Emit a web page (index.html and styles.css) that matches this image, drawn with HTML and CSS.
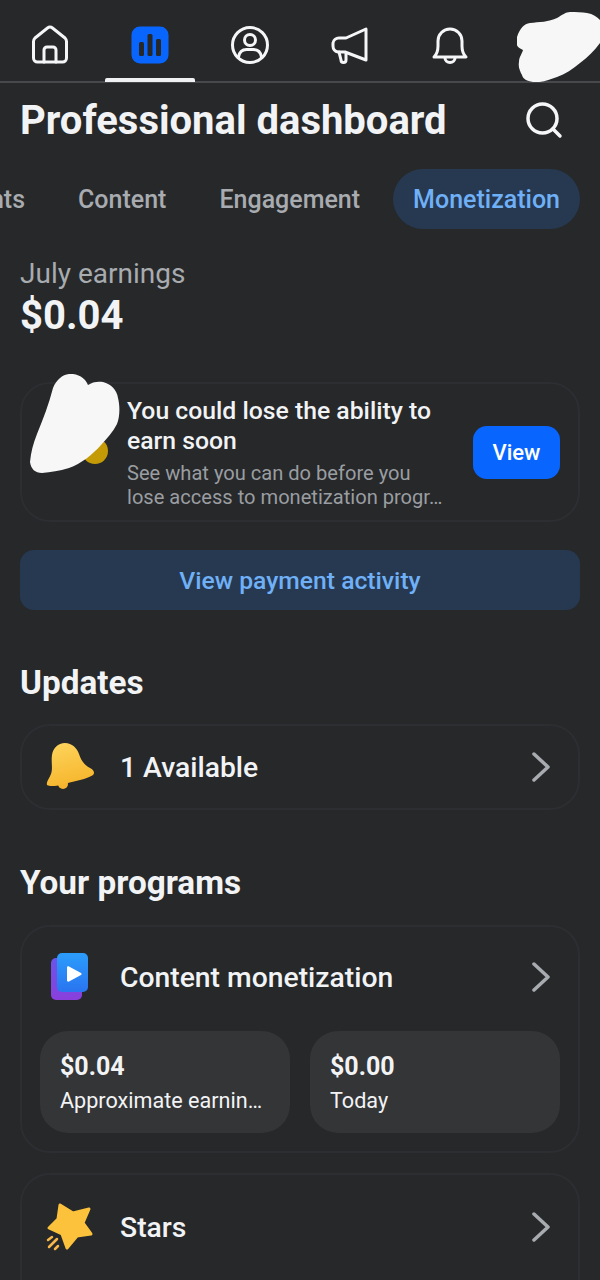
FILE: index.html
```html
<!DOCTYPE html>
<html lang="en">
<head>
    <meta charset="UTF-8">
    <meta name="viewport" content="width=device-width, initial-scale=1.0">
    <title>Professional dashboard</title>
    <link rel="stylesheet" href="styles.css">
</head>
<body>
    <nav class="nav">
        <div class="nav-item">
            <svg class="nav-icon" viewBox="0 0 40 40"><path d="M3.500 16.500c0-1.500.5-2.500 1.500-3.500L17.500 3a4 4 0 0 1 5 0L35 13c1 1 1.500 2 1.500 3.500V33a4 4 0 0 1-4 4h-25a4 4 0 0 1-4-4z"/><path d="M14 37V25a3 3 0 0 1 3-3h6a3 3 0 0 1 3 3v12"/></svg>
        </div>
        <div class="nav-item nav-item-active">
            <svg class="nav-icon" viewBox="0 0 40 40"><rect class="dash-bg" x="3" y="3" width="34" height="34" rx="7"/><rect class="dash-bar" x="9" y="17" width="5" height="14" rx="1.500"/><rect class="dash-bar" x="17.500" y="9" width="5" height="22" rx="1.500"/><rect class="dash-bar" x="26" y="14" width="5" height="17" rx="1.500"/></svg>
        </div>
        <div class="nav-item">
            <svg class="nav-icon" viewBox="0 0 40 40"><circle cx="20" cy="20" r="17.500"/><circle cx="20" cy="15" r="5.500"/><path d="M8.500 32c1-5.500 4.500-7.500 8-7.500h7c3.500 0 7 2 8 7.500"/></svg>
        </div>
        <div class="nav-item">
            <svg class="nav-icon" viewBox="0 0 40 40"><path d="M36 4v31L15 27H8a6 6 0 0 1-5-6v-3a6 6 0 0 1 6-5h7z"/><path d="M9 27l2 8a2.500 2.500 0 0 0 5 0v-7"/></svg>
        </div>
        <div class="nav-item">
            <svg class="nav-icon" viewBox="0 0 40 40"><path d="M4 32c3-3 4-6 4-11v-5a12 12 0 0 1 24 0v5c0 5 1 8 4 11z"/><path d="M15 33a5 4.500 0 0 0 10 0"/></svg>
        </div>
        <div class="nav-item"></div>
    </nav>

    <header class="page-head">
        <h1 class="title">Professional dashboard</h1>
        <svg class="search-icon" viewBox="0 0 40 40"><circle cx="18.500" cy="18.500" r="14.500"/><path d="M29 29l7 7"/></svg>
    </header>

    <div class="tabs">
        <span class="tab">Insights</span>
        <span class="tab">Content</span>
        <span class="tab">Engagement</span>
        <span class="tab tab-active">Monetization</span>
    </div>

    <main class="content">
        <section class="earnings">
            <p class="earnings-label">July earnings</p>
            <p class="earnings-value">$0.04</p>
        </section>

        <section class="card alert">
            <span class="alert-dot"></span>
            <div class="alert-text">
                <h3 class="alert-title">You could lose the ability to earn soon</h3>
                <p class="alert-sub">See what you can do before you lose access to monetization progr…</p>
            </div>
            <button class="view-btn" type="button">View</button>
        </section>

        <button class="pay-btn" type="button">View payment activity</button>

        <h2 class="section-title">Updates</h2>
        <section class="card">
            <div class="row row-update">
                <svg class="row-icon" viewBox="0 0 50 50">
                    <defs><linearGradient id="gold" x1="0.300" y1="0" x2="0.600" y2="1"><stop offset="0" stop-color="#fdd35a"/><stop offset="1" stop-color="#f6b52c"/></linearGradient></defs>
                    <circle cx="19" cy="42" r="5" fill="#f5b52e"/>
                    <path fill="url(#gold)" d="M3 43C2 40 5 37 7 32 9 27 7 20 8 13 9 6 14 1 21 1c7 0 12 5 14 11 2 6 5 11 11 14 4 2 5 5 3 7-4 3-13 5-21 7-8 2-20 6-25 3z"/>
                </svg>
                <span class="row-label">1 Available</span>
                <svg class="chevron" viewBox="0 0 18 30"><path d="M2 2l14 13L2 28"/></svg>
            </div>
        </section>

        <h2 class="section-title section-title-programs">Your programs</h2>
        <section class="card">
            <div class="row row-tall">
                <svg class="row-icon" viewBox="0 0 50 50">
                    <defs>
                        <linearGradient id="blue" x1="0" y1="0" x2="0" y2="1"><stop offset="0" stop-color="#2b9dfb"/><stop offset="1" stop-color="#2a74f0"/></linearGradient>
                        <linearGradient id="violet" x1="0" y1="0" x2="0" y2="1"><stop offset="0" stop-color="#6a55ea"/><stop offset="1" stop-color="#8a3fdc"/></linearGradient>
                    </defs>
                    <rect x="7" y="6" width="31" height="42" rx="5" fill="url(#violet)"/>
                    <rect x="13" y="1" width="31" height="39" rx="5" fill="url(#blue)"/>
                    <path d="M23 15.500c0-1 1-1.500 2-1l12 6.500c.8.500.8 1.500 0 2l-12 6.500c-1 .5-2 0-2-1z" fill="#fff"/>
                </svg>
                <span class="row-label">Content monetization</span>
                <svg class="chevron" viewBox="0 0 18 30"><path d="M2 2l14 13L2 28"/></svg>
            </div>
            <div class="stats">
                <div class="stat">
                    <span class="stat-value">$0.04</span>
                    <span class="stat-label">Approximate earnin…</span>
                </div>
                <div class="stat">
                    <span class="stat-value">$0.00</span>
                    <span class="stat-label">Today</span>
                </div>
            </div>
        </section>

        <section class="card card-stars">
            <div class="row">
                <svg class="row-icon" viewBox="0 0 50 50">
                    <path class="star" d="M16 3l13 8 16-4-6 14 8 11-14 2-10 12-5-14-13-6 9-9z"/>
                    <path d="M4 38l4-3M5 45l8-8M11 47l3-3" stroke="#f8b74a" stroke-width="2.500" stroke-linecap="round" fill="none"/>
                </svg>
                <span class="row-label">Stars</span>
                <svg class="chevron" viewBox="0 0 18 30"><path d="M2 2l14 13L2 28"/></svg>
            </div>
        </section>
    </main>

    <!-- scribbles the screenshot's owner painted over the profile pictures -->
    <svg class="scribble scribble-top" viewBox="0 0 83 70"><path d="M0 25C3 16 7 12 13 11c9-1 19-1 27-5 5-3 9-6 13-6 6 0 12 0 17 1 6 1 10 4 13 7v23C77 39 71 45 63 51c-7 6-15 11-23 14-8 3-16 6-24 5-6-1-10-3-11-7-2-4-4-8-3-13 0-5 3-8 4-12-3-2-7-3-6-7 0-2-1-4 0-6z"/></svg>
    <svg class="scribble scribble-alert" viewBox="0 0 92 100"><path d="M1 88C2 78 4 70 8 60 14 45 20 30 24 14 28 4 36-1 44 0c8 1 13 6 15 11 4-3 10-4 15-3 8 2 14 8 15 16 2 8 2 18-1 26-4 8-10 14-16 21-8 9-20 19-32 23-10 3-18 4-27 5-7 0-11-4-12-11z"/></svg>
</body>
</html>
```

FILE: styles.css
```css
body {
    position: relative;
    width: 600px;
    height: 1280px;
    margin: 0;
    overflow: hidden;
    font-family: Roboto, "Liberation Sans", sans-serif;
    background-color: #26282a;
    color: #f2f3f5;
}

h1, h2, h3, p {
    margin: 0;
}

.nav {
    display: flex;
    height: 81px;
    border-bottom: 2px solid #47494c;
}

.nav-item {
    display: flex;
    flex: 1;
    justify-content: center;
    padding-top: 25px;
    position: relative;
}

.nav-item-active::after {
    content: "";
    position: absolute;
    left: 5px;
    right: 5px;
    bottom: -1px;
    height: 4px;
    border-radius: 2px 2px 0 0;
    background-color: #f0f1f3;
}

.nav-icon {
    width: 40px;
    height: 40px;
    fill: none;
    stroke: #f5f6f7;
    stroke-width: 3;
    stroke-linejoin: round;
    stroke-linecap: round;
}

.dash-bg {
    fill: #0866ff;
    stroke: #0866ff;
}

.dash-bar {
    fill: #26282a;
    stroke: none;
}

.page-head {
    display: flex;
    align-items: center;
    justify-content: space-between;
    height: 74px;
    padding: 0 36px 0 20px;
}

.title {
    font-size: 40px;
    font-weight: 700;
}

.search-icon {
    width: 40px;
    height: 40px;
    fill: none;
    stroke: #f5f6f7;
    stroke-width: 3.500;
    stroke-linecap: round;
}

.tabs {
    display: flex;
    justify-content: flex-end;
    gap: 13px;
    height: 60px;
    margin-top: 12px;
    padding-right: 20px;
    overflow: hidden;
}

.tab {
    flex-shrink: 0;
    padding: 0 20px;
    line-height: 62px;
    font-size: 25px;
    font-weight: 500;
    color: #a8abaf;
}

.tab-active {
    border-radius: 30px;
    background-color: #263951;
    color: #6fb0f7;
}

.content {
    padding: 0 20px;
}

.earnings {
    margin-top: 28px;
}

.earnings-label {
    font-size: 28px;
    line-height: 34px;
    color: #a8abaf;
}

.earnings-value {
    margin-top: 1px;
    font-size: 40px;
    line-height: 48px;
    font-weight: 700;
}

.card {
    border: 2px solid #2c2e31;
    border-radius: 30px;
}

.alert {
    display: flex;
    align-items: center;
    height: 140px;
    box-sizing: border-box;
    margin-top: 42px;
    padding-right: 18px;
}

.alert-dot {
    flex-shrink: 0;
    width: 26px;
    height: 26px;
    margin-left: 60px;
    margin-right: 19px;
    border-radius: 50%;
    background-color: #c49a07;
    align-self: flex-start;
    margin-top: 54px;
}

.alert-text {
    flex: 1;
    min-width: 0;
    padding-right: 22px;
}

.alert-title {
    font-size: 24.750px;
    line-height: 30px;
    font-weight: 500;
}

.alert-sub {
    margin-top: 5px;
    font-size: 20.100px;
    line-height: 24px;
    color: #9a9da1;
}

.view-btn {
    flex-shrink: 0;
    width: 87px;
    height: 53px;
    border: none;
    border-radius: 14px;
    background-color: #0866ff;
    color: #ffffff;
    font-family: inherit;
    font-size: 22px;
    font-weight: 500;
}

.pay-btn {
    display: block;
    width: 100%;
    height: 60px;
    margin-top: 28px;
    border: none;
    border-radius: 14px;
    background-color: #263951;
    color: #6fb0f7;
    font-family: inherit;
    font-size: 24.700px;
    font-weight: 500;
}

.section-title {
    margin-top: 53px;
    margin-bottom: 21px;
    font-size: 33.300px;
    line-height: 40px;
    font-weight: 700;
}

.section-title-programs {
    margin-top: 53px;
    margin-bottom: 22px;
}

.row {
    display: flex;
    align-items: center;
    height: 80px;
    padding: 0 28px 0 22px;
}

.row-update {
    padding-top: 1px;
    padding-bottom: 1px;
}

.row-tall {
    height: 100px;
}

.row-icon {
    flex-shrink: 0;
    width: 50px;
    height: 50px;
    margin-right: 26px;
}

.row-label {
    flex: 1;
    font-size: 28.300px;
    font-weight: 500;
}

.chevron {
    width: 18px;
    height: 30px;
    fill: none;
    stroke: #a8abaf;
    stroke-width: 3.500;
    stroke-linecap: round;
    stroke-linejoin: round;
}

.stats {
    display: flex;
    gap: 20px;
    padding: 4px 18px 18px;
}

.stat {
    display: flex;
    flex: 1;
    flex-direction: column;
    height: 102px;
    box-sizing: border-box;
    padding: 21px 20px 0;
    border-radius: 28px;
    background-color: #343537;
}

.stat-value {
    font-size: 25px;
    line-height: 30px;
    font-weight: 700;
}

.stat-label {
    margin-top: 4px;
    font-size: 21.600px;
    line-height: 30px;
}

.card-stars {
    margin-top: 20px;
    padding-top: 12px;
    height: 150px;
}

.star {
    fill: #fcc23c;
    stroke: #fcc23c;
    stroke-width: 3;
    stroke-linejoin: round;
}

.scribble {
    position: absolute;
    fill: #f7f7f7;
}

.scribble-top {
    left: 517px;
    top: 12px;
    width: 83px;
    height: 70px;
}

.scribble-alert {
    left: 29px;
    top: 374px;
    width: 92px;
    height: 100px;
}
```
